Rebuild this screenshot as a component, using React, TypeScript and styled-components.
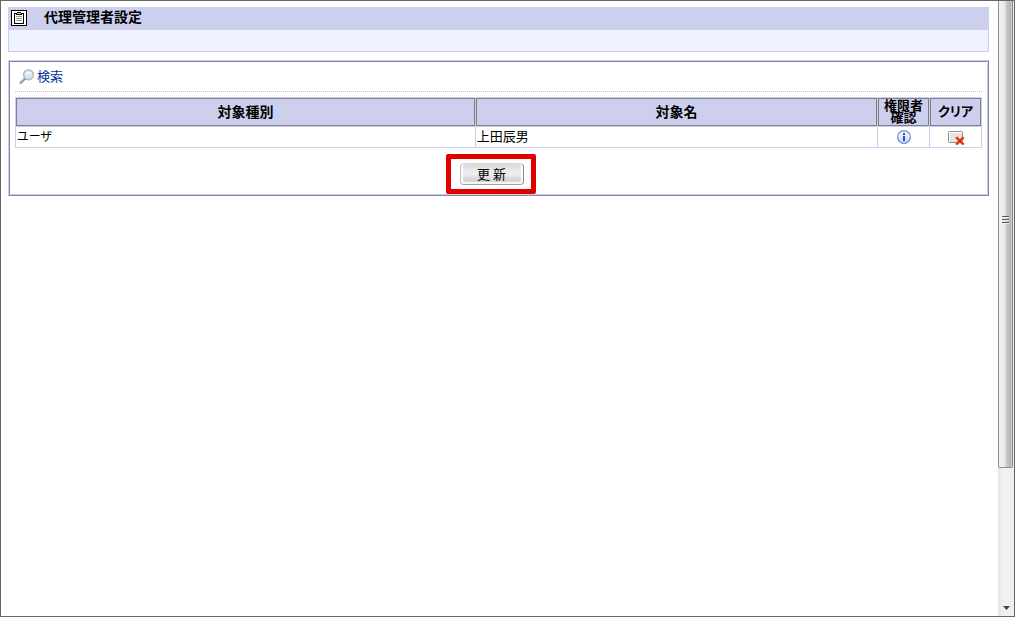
import React from 'react';
import styled, { createGlobalStyle } from 'styled-components';

const line = '#cccdec';
const bar = '#cccfee';
const shade = '#8485a8';

const GlobalStyle = createGlobalStyle`
  * { box-sizing: border-box; }
  body {
    margin: 0;
    background: #fff;
    color: #000;
    font: 13px/16px "Noto Sans CJK JP", sans-serif;
    font-feature-settings: "palt";
  }
`;

const Frame = styled.div`
  display: flex;
  min-height: 100vh;
  border: 1px solid #666;
`;

const Content = styled.main`
  flex: 1;
  min-width: 0;
  padding: 6px 9px 8px 7px;
`;

const TitleBar = styled.header`
  display: flex;
  align-items: flex-start;
  gap: 17px;
  height: 23px;
  padding: 2px 2px 0;
  background: ${bar};
`;

const Title = styled.h1`
  margin: 0;
  font-size: 14px;
  line-height: 14px;
  font-weight: 700;
`;

const SubBar = styled.div`
  height: 22px;
  border: 1px solid ${line};
  border-top: 0;
  background: #eff3ff;
`;

const Panel = styled.section`
  margin-top: 8px;
  border: 1px solid;
  border-color: ${line} ${shade} ${shade} ${line};
`;

const PanelInner = styled.div`
  padding: 5px;
  padding-bottom: 9px;
  border: 1px solid;
  border-color: ${shade} ${line} ${line} ${shade};
`;

const Tools = styled.nav`
  height: 25px;
  margin-bottom: 5px;
  padding: 1px 4px;
  border-bottom: 1px dotted #bfc0d4;
`;

const SearchLink = styled.a`
  display: inline-flex;
  align-items: center;
  gap: 2px;
  color: #039;
  text-decoration: none;
`;

const Table = styled.table`
  width: 100%;
  table-layout: fixed;
  border-spacing: 1px;
  background: ${line};
`;

const Col = styled.col<{ $width?: string }>`
  width: ${(p) => p.$width || 'auto'};
`;

const HeadCell = styled.th<{ $narrow?: boolean }>`
  height: 28px;
  padding: 0 0 2px;
  border: 1px solid #808080;
  background: ${bar};
  font-size: ${(p) => (p.$narrow ? 13 : 14)}px;
  line-height: 12px;
  font-weight: 700;
`;

const Cell = styled.td<{ $center?: boolean; $small?: boolean }>`
  height: 20px;
  padding: 0 1px;
  background: #fff;
  font-size: ${(p) => (p.$small ? 12 : 13)}px;
  line-height: 18px;
  vertical-align: top;
  text-align: ${(p) => (p.$center ? 'center' : 'left')};
`;

const IconButton = styled.button`
  display: block;
  margin: 2px auto 0;
  padding: 0;
  border: 0;
  background: none;
  line-height: 0;
`;

const Actions = styled.div`
  display: flex;
  justify-content: center;
  padding: 15px 14px 0 0;
`;

const Highlighted = styled.div`
  position: relative;
  display: flex;
  &::after {
    content: '';
    position: absolute;
    inset: -9px -12px -9px -14px;
    border: 5px solid #df0000;
    border-radius: 2px;
    pointer-events: none;
  }
`;

const UpdateButton = styled.button`
  width: 64px;
  height: 22px;
  padding: 0;
  border: 1px solid;
  border-color: #d8d8d8 #858585 #a2a2a2 #bdbdbd;
  border-radius: 4px;
  background: linear-gradient(#d4d4d4, #e6e6e6 25%, #f0f0f0 50%, #d2d2d2 80%, #e2e2e2);
  box-shadow: inset 2px 0 1px #fff, inset -2px 0 1px #fff, inset 0 -2px 1px #f5f5f5;
  color: #000;
  font: inherit;
`;

const ScrollTrack = styled.aside`
  display: flex;
  flex-direction: column;
  justify-content: space-between;
  align-items: center;
  width: 16px;
  background: linear-gradient(90deg, #e6e6e6, #f2f2f2 40%, #ededed);
`;

const ScrollThumb = styled.div`
  display: flex;
  align-items: center;
  justify-content: center;
  width: 15px;
  height: 76%;
  margin-right: 1px;
  padding-bottom: 28px;
  border: 1px solid #8b8b8b;
  border-top: 0;
  border-radius: 0 0 2px 2px;
  background: linear-gradient(90deg, #f4f4f4, #e8e8e8 45%, #c6c6c6 60%, #b5b5b5 90%, #ddd);
`;

const DownArrow = styled.svg`
  margin-bottom: 6px;
`;

const ClipboardIcon = () => (
  <svg width="17" height="17" viewBox="0 0 17 17" shapeRendering="crispEdges" aria-hidden="true">
    <path d="M1 1h16v16H1z" fill="#000" />
    <path d="M2 2h14v14H2z" fill="#fff" />
    <path d="M4 4h10v11H4z" fill="#000" />
    <path d="M5 5h8v9H5z" fill="#fff" />
    <path d="M6 4h6v2H6zM7 3h4v1H7z" fill="#111" />
    <path d="M7 4h4v1H7z" fill="#efb64b" />
    <path d="M6 7h6v1H6zM6 9h6v1H6zM6 11h6v1H6z" fill="#999a90" />
  </svg>
);

const SearchIcon = () => (
  <svg width="16" height="16" viewBox="0 0 16 16" aria-hidden="true">
    <path d="M6 10.5 1.8 14.7" stroke="#858585" strokeWidth="2.4" strokeLinecap="round" />
    <path d="M5.5 10.4 1.6 14.3" stroke="#cfcfcf" strokeWidth="1" strokeLinecap="round" />
    <circle cx="9.5" cy="6.8" r="4.9" fill="#d3e5f4" stroke="#b2b5ba" strokeWidth="1.4" />
    <path d="M5.9 6.6a3.7 3.7 0 0 1 7.2-.6c-2.3-.4-4.2 1.4-7.2.6z" fill="#eef6fc" />
  </svg>
);

const InfoIcon = () => (
  <svg width="16" height="16" viewBox="0 0 16 16" aria-hidden="true">
    <defs>
      <linearGradient id="info" x2="0" y2="1">
        <stop stopColor="#fff" />
        <stop offset="1" stopColor="#c3d3f4" />
      </linearGradient>
    </defs>
    <circle cx="8" cy="8" r="6.4" fill="url(#info)" stroke="#7390d2" strokeWidth="1.2" />
    <path d="M7 4h2v2H7zM7 7h2v5H7z" fill="#2850c4" />
  </svg>
);

const ClearIcon = () => (
  <svg width="18" height="16" viewBox="0 0 18 16" aria-hidden="true">
    <rect x="1.5" y="2.5" width="14" height="11" rx="1" fill="#e4e4e0" stroke="#8a9690" />
    <path d="M2.5 12.5v-9h12" fill="none" stroke="#fff" />
    <path d="m10 9 5.8 5.8M15.8 9 10 14.8" stroke="#f55a2c" strokeWidth="2.6" strokeLinecap="square" />
    <path d="m10 9 5.8 5.8M15.8 9 10 14.8" stroke="#dc2410" strokeWidth="1.4" strokeLinecap="square" />
  </svg>
);

const GripIcon = () => (
  <svg width="7" height="8" viewBox="0 0 7 8" shapeRendering="crispEdges" aria-hidden="true">
    <path d="M0 0h7v1H0zM0 3h7v1H0zM0 6h7v1H0z" fill="#555" />
    <path d="M0 1h7v1H0zM0 4h7v1H0zM0 7h7v1H0z" fill="#eee" />
  </svg>
);

const DownIcon = () => (
  <DownArrow width="7" height="4" viewBox="0 0 7 4" aria-hidden="true">
    <path d="M0 0h7L3.5 4z" fill="#444" />
  </DownArrow>
);

const rows = [{ kind: 'ユーザ', name: '上田辰男' }];

export default function App() {
  return (
    <Frame>
      <GlobalStyle />
      <Content>
        <TitleBar>
          <ClipboardIcon />
          <Title>代理管理者設定</Title>
        </TitleBar>
        <SubBar />
        <Panel>
          <PanelInner>
            <Tools>
              <SearchLink href="#search">
                <SearchIcon />
                検索
              </SearchLink>
            </Tools>
            <Table>
              <colgroup>
                <Col />
                <Col $width="41.7%" />
                <Col $width="51px" />
                <Col $width="51px" />
              </colgroup>
              <thead>
                <tr>
                  <HeadCell>対象種別</HeadCell>
                  <HeadCell>対象名</HeadCell>
                  <HeadCell $narrow>
                    権限者
                    <br />
                    確認
                  </HeadCell>
                  <HeadCell $narrow>クリア</HeadCell>
                </tr>
              </thead>
              <tbody>
                {rows.map((row) => (
                  <tr key={row.name}>
                    <Cell $small>{row.kind}</Cell>
                    <Cell>{row.name}</Cell>
                    <Cell $center>
                      <IconButton type="button" aria-label="権限者確認">
                        <InfoIcon />
                      </IconButton>
                    </Cell>
                    <Cell $center>
                      <IconButton type="button" aria-label="クリア">
                        <ClearIcon />
                      </IconButton>
                    </Cell>
                  </tr>
                ))}
              </tbody>
            </Table>
            <Actions>
              <Highlighted>
                <UpdateButton type="button">更 新</UpdateButton>
              </Highlighted>
            </Actions>
          </PanelInner>
        </Panel>
      </Content>
      <ScrollTrack aria-hidden="true">
        <ScrollThumb>
          <GripIcon />
        </ScrollThumb>
        <DownIcon />
      </ScrollTrack>
    </Frame>
  );
}
